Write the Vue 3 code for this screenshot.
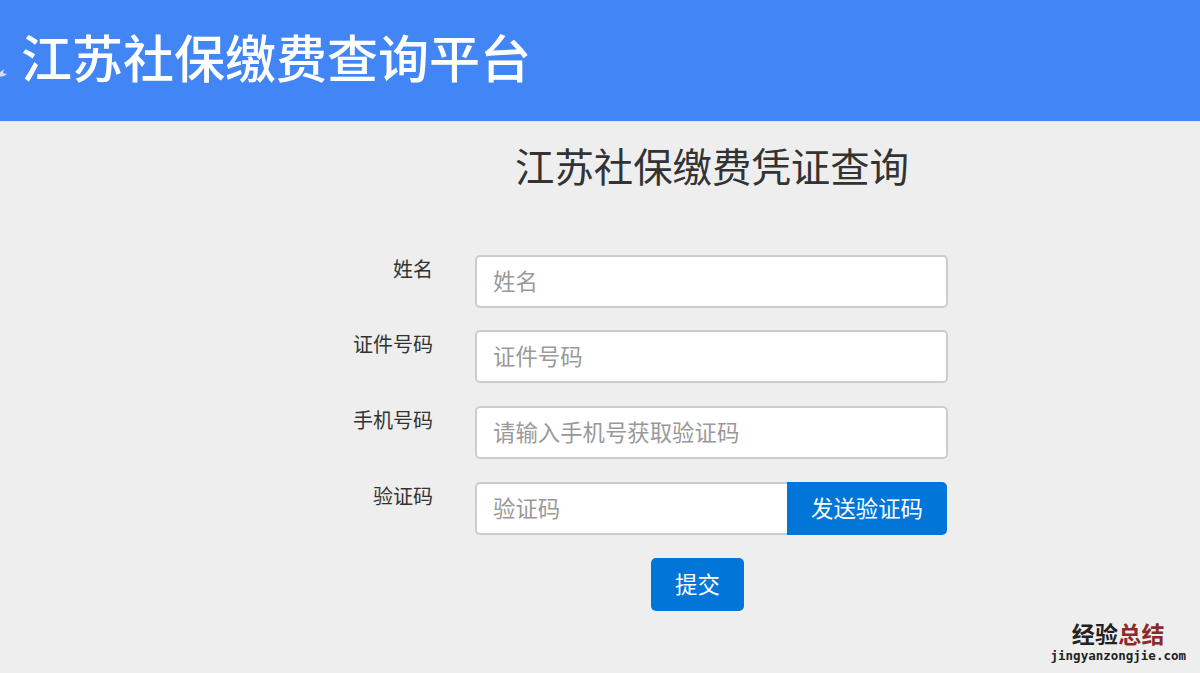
<script setup>
const fields = [
  { label: '姓名', placeholder: '姓名' },
  { label: '证件号码', placeholder: '证件号码' },
  { label: '手机号码', placeholder: '请输入手机号获取验证码' },
]
</script>

<template>
  <div class="page">
    <header class="banner">
      <svg class="logo-bit" width="10" height="12" viewBox="0 0 10 12">
        <path d="M0 6 L5 2 L4 6 L8 7 L5 9 L0 10 Z" fill="#d7dde8" />
      </svg>
      <span class="banner-title">江苏社保缴费查询平台</span>
    </header>
    <h1 class="heading">江苏社保缴费凭证查询</h1>
    <form class="form" @submit.prevent>
      <div v-for="f in fields" :key="f.label" class="row">
        <label class="label">{{ f.label }}</label>
        <input class="input" :placeholder="f.placeholder" />
      </div>
      <div class="row">
        <label class="label">验证码</label>
        <div class="group">
          <input class="input joined" placeholder="验证码" />
          <button type="button" class="btn send">发送验证码</button>
        </div>
      </div>
      <div class="actions">
        <button type="submit" class="btn submit">提交</button>
      </div>
    </form>
    <div class="watermark">
      <div class="wm-cn">经验<span class="wm-red">总结</span></div>
      <div class="wm-en">jingyanzongjie.com</div>
    </div>
  </div>
</template>

<style>
html, body { margin: 0; background: #eeeeee; }
</style>

<style scoped>
.page {
  position: relative;
  height: 673px;
  overflow: hidden;
  background: #eeeeee;
  font-family: "Liberation Sans", "Noto Sans CJK SC", sans-serif;
}
.banner {
  display: flex;
  align-items: center;
  height: 121px;
  background: #4285f4;
  box-shadow: 0 1px 0 #e3e6ee;
}
.logo-bit { flex: none; margin-left: -1px; position: relative; top: 12px; }
.banner-title {
  margin-left: 12px;
  font-size: 51px;
  line-height: 60px;
  color: #fff;
  font-weight: 500;
  filter: blur(0.4px);
}
.heading {
  margin: 23px 0 0 319px;
  width: 786px;
  text-align: center;
  font-size: 39.4px;
  line-height: 48px;
  font-weight: 400;
  color: #333;
}
.form { margin-top: 62.6px; }
.row { display: flex; height: 53px; margin-bottom: 22.75px; }
.label {
  width: 433px;
  padding-top: 2px;
  text-align: right;
  font-size: 20px;
  line-height: 27px;
  color: #333;
}
.input {
  box-sizing: border-box;
  width: 473px;
  height: 53px;
  margin-left: 42px;
  padding: 3px 16px 0;
  border: 2px solid #ccc;
  border-radius: 5px;
  background: #fff;
  font-family: inherit;
  font-size: 22.4px;
  color: #333;
  outline: none;
}
.input::placeholder { color: #999; opacity: 1; }
.group { display: flex; margin-left: 42px; width: 472px; }
.input.joined {
  margin-left: 0;
  width: 312px;
  border-right: 0;
  border-radius: 5px 0 0 5px;
}
.btn {
  border: 0;
  background: #0275d8;
  color: #fff;
  font-family: inherit;
  font-size: 22.4px;
  padding: 0 0 2px;
}
.send { width: 160px; height: 53px; border-radius: 0 5px 5px 0; }
.actions { display: flex; justify-content: center; width: 1000px; padding-left: 395px; box-sizing: border-box; }
.submit { width: 93px; height: 53px; border-radius: 5px; }
.watermark {
  position: absolute;
  right: 14px;
  top: 622px;
  text-align: center;
  color: #222;
}
.wm-cn {
  font-family: "DejaVu Sans", "Noto Sans CJK SC", sans-serif;
  font-size: 23px;
  line-height: 27px;
  font-weight: 700;
  letter-spacing: 0.3px;
}
.wm-red { color: #8a2a2a; }
.wm-en {
  font-family: "DejaVu Sans Mono", monospace;
  font-size: 12.5px;
  line-height: 13px;
  font-weight: 700;
}
</style>
